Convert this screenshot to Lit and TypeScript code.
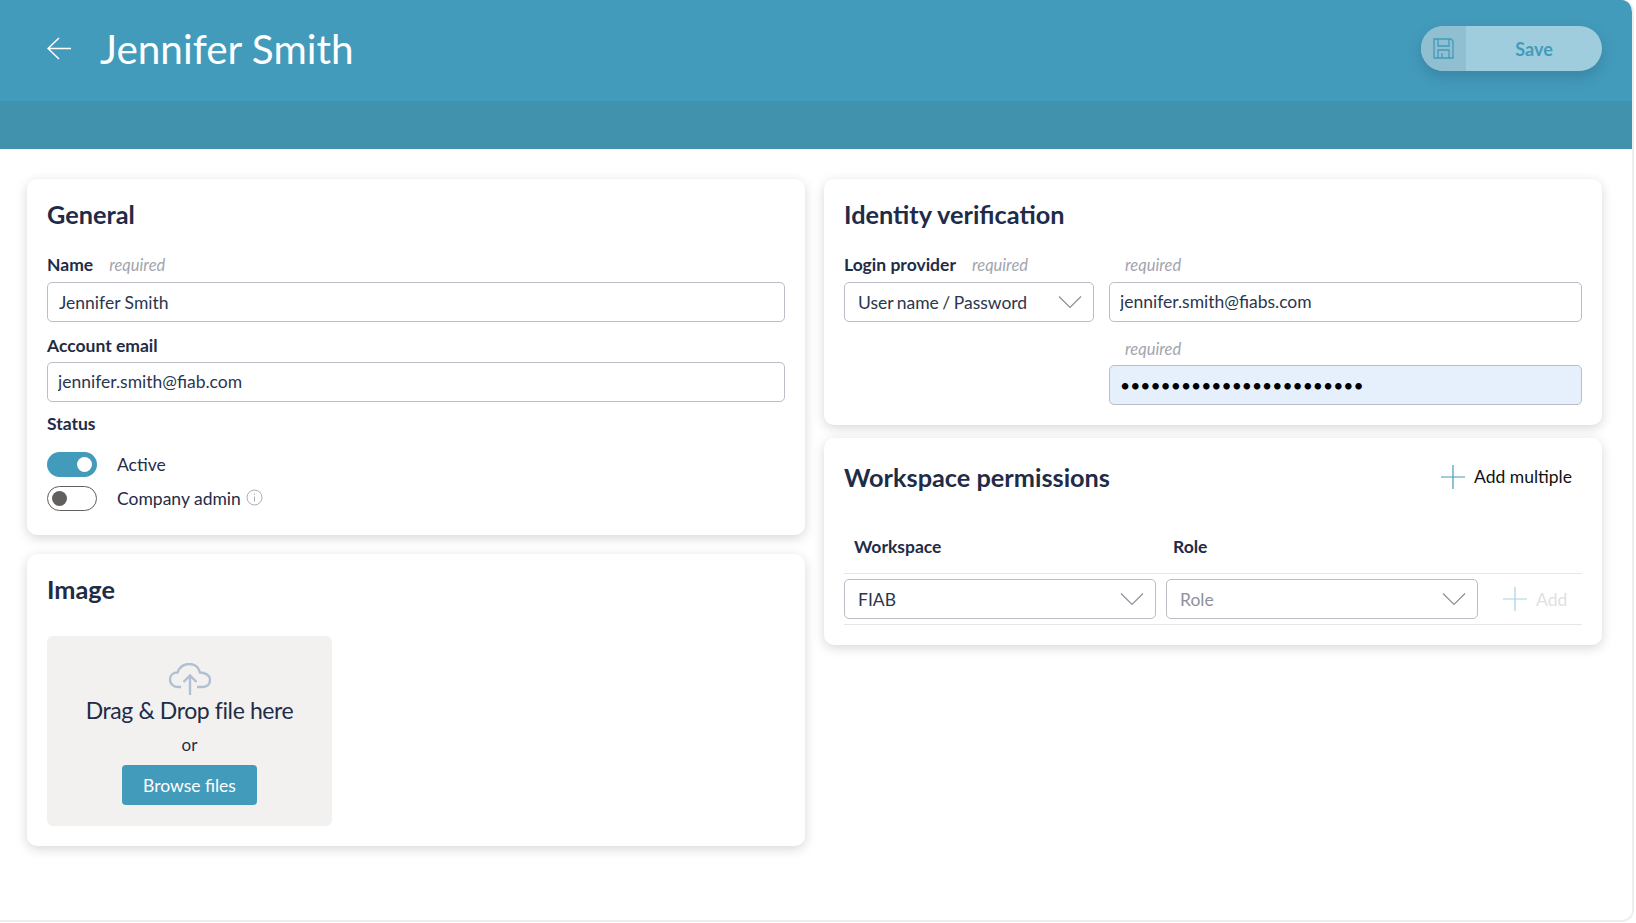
import { LitElement, html, css, svg } from "lit";
import { customElement } from "lit/decorators.js";

const chevron = html`<svg class="chev" width="24" height="14" viewBox="0 0 24 14" fill="none" stroke="#8b8f99" stroke-width="1.2"><path d="M1 1.5 12 12.5 23 1.5"/></svg>`;

const plus = () => html`<svg width="24" height="24" viewBox="0 0 24 24" fill="none" stroke="#439bbb" stroke-width="1.2"><path d="M0 12H24M12 0V24"/></svg>`;

const floppy = svg`<g fill="none" stroke="#439bbb" stroke-width="1.3"><path d="M1 1H18L20 3V20H1Z"/><path d="M5 1V8H16V1"/><path d="M5 20V12H16V20"/><path d="M9 15V20"/></g>`;

@customElement("app-root")
export class AppRoot extends LitElement {
  static styles = css`
    :host {
      display: block;
      font-family: "Lato", "Liberation Sans", sans-serif;
      color: #1f2c47;
      background: #fff;
    }
    * { box-sizing: border-box; }
    .frame {
      height: 922px;
      width: 1634px;
      border-right: 2px solid #eee;
      border-bottom: 2px solid #eee;
      border-radius: 0 12px 12px 0;
      overflow: hidden;
      background: #fff;
    }
    .head {
      height: 101px;
      background: #439bbb;
      display: flex;
      align-items: flex-start;
      padding: 26px 30px 0 47px;
    }
    .back { margin-top: 11px; }
    h1 {
      margin: -2px 0 0 29px;
      font-size: 40.5px;
      line-height: 49px;
      font-weight: 400;
      color: #fff;
    }
    .save {
      margin-left: auto;
      width: 181px;
      height: 45px;
      border-radius: 23px;
      overflow: hidden;
      display: flex;
      background: #a0cddd;
      box-shadow: 0 6px 14px rgba(30, 80, 110, 0.28);
    }
    .save .ico {
      width: 45px;
      background: #90bfd1;
      display: flex;
      align-items: center;
      justify-content: center;
    }
    .save .lbl {
      flex: 1;
      text-align: center;
      line-height: 46px;
      font-size: 18px;
      font-weight: 700;
      color: #439bbb;
    }
    .band { height: 48px; background: #4092ad; }
    .main {
      display: grid;
      grid-template-columns: 778px 778px;
      gap: 19px;
      padding: 30px 0 0 27px;
      align-items: start;
    }
    .col { display: flex; flex-direction: column; }
    .card {
      background: #fff;
      border-radius: 10px;
      box-shadow: 0 3px 12px rgba(0, 0, 0, 0.16);
      padding: 20px 20px 20px;
    }
    h2 {
      margin: 0;
      font-size: 25.3px;
      line-height: 30px;
      font-weight: 700;
      color: #1f2c47;
    }
    .general { height: 356px; }
    .image { height: 292px; margin-top: 19px; }
    .identity { height: 246px; }
    .perm { height: 207px; margin-top: 13px; padding-top: 24px; }
    .label {
      display: flex;
      align-items: baseline;
      gap: 16px;
      font-size: 17.5px;
      line-height: 22px;
      font-weight: 700;
    }
    .req {
      font-size: 16.5px;
      font-style: italic;
      font-weight: 400;
      color: #a2a5ae;
    }
    .field {
      display: block;
      width: 100%;
      height: 40px;
      border: 1px solid #bcbcc6;
      border-radius: 5px;
      background: #fff;
      font: 400 17.5px "Lato", sans-serif;
      color: #2a3650;
      padding: 0 11px;
      outline: none;
    }
    .field.tight { padding: 0 10px 2px; }
    .field.pw { padding: 0 10px; background: #e6f0fc; color: #000; }
    .select {
      height: 40px;
      border: 1px solid #bcbcc6;
      border-radius: 5px;
      display: flex;
      align-items: center;
      justify-content: space-between;
      padding: 0 11px 0 13px;
      font-size: 17.5px;
      word-spacing: -1px;
      color: #2a3650;
    }
    .select.ph { color: #8e919c; }
    .g-name { margin-top: 25px; }
    .g-name .field { margin-top: 6px; }
    .g-mail { margin-top: 13px; }
    .g-mail .field { margin-top: 5px; }
    .g-status { margin-top: 11px; }
    .toggles {
      margin-top: 17px;
      display: flex;
      flex-direction: column;
      gap: 9px;
    }
    .tg-row {
      display: flex;
      align-items: center;
      gap: 20px;
      font-size: 17.5px;
      line-height: 25px;
    }
    .tg {
      width: 50px;
      height: 25px;
      border-radius: 13px;
      display: flex;
      align-items: center;
      padding: 0 5px;
    }
    .tg.on { background: #439bbb; justify-content: flex-end; }
    .tg.off { border: 1px solid #62605e; padding: 0 4px; }
    .knob { width: 15px; height: 15px; border-radius: 50%; }
    .on .knob { background: #fff; }
    .off .knob { background: #62605e; }
    .info { margin-left: 5px; vertical-align: -1px; }
    .drop {
      margin-top: 32px;
      width: 285px;
      height: 190px;
      background: #f3f1f0;
      border-radius: 6px;
      display: flex;
      flex-direction: column;
      align-items: center;
      padding-top: 27px;
    }
    .drop .big {
      font-size: 23px;
      letter-spacing: -0.4px;
      line-height: 32px;
      margin-top: -1px;
    }
    .drop .or { font-size: 17px; line-height: 22px; margin-top: 8px; }
    .browse {
      margin-top: 9px;
      width: 135px;
      height: 40px;
      background: #439bbb;
      border-radius: 4px;
      color: #fff;
      font-size: 17.5px;
      line-height: 41px;
      text-align: center;
    }
    .id-grid {
      margin-top: 25px;
      display: grid;
      grid-template-columns: 250px 473px;
      column-gap: 15px;
    }
    .id-grid .label { height: 22px; margin-bottom: 6px; }
    .id-grid .right { padding-left: 16px; }
    .second { margin-top: 16px; grid-column: 2; }
    .id-grid .second .label { margin-bottom: 5px; }
    .p-head { display: flex; justify-content: space-between; align-items: center; }
    .add-m {
      display: flex;
      align-items: center;
      gap: 9px;
      font-size: 17.5px;
      color: #111;
      padding-right: 10px;
    }
    .add-m span { margin-top: -2px; }
    .t-head {
      margin-top: 44px;
      display: grid;
      grid-template-columns: 312px 312px;
      column-gap: 10px;
      height: 38px;
      border-bottom: 1px solid #e6e6ea;
      font-size: 17.5px;
      font-weight: 700;
      line-height: 22px;
    }
    .t-head div { padding-left: 10px; }
    .t-head div + div { padding-left: 7px; }
    .t-row {
      display: grid;
      grid-template-columns: 312px 312px 1fr;
      column-gap: 10px;
      height: 51px;
      align-items: center;
      border-bottom: 1px solid #e6e6ea;
    }
    .add-s {
      display: flex;
      align-items: center;
      gap: 9px;
      padding-left: 15px;
      font-size: 17.5px;
      color: #dfdfe2;
    }
    .add-s svg { opacity: 0.45; }
  `;

  render() {
    return html`
      <div class="frame">
        <div class="head">
          <svg class="back" width="24" height="23" viewBox="0 0 24 23" fill="none" stroke="#fff" stroke-width="1.5"><path d="M24 11.5H1M12 1 1 11.5 12 22"/></svg>
          <h1>Jennifer Smith</h1>
          <div class="save">
            <div class="ico"><svg width="21" height="21" viewBox="0 0 21 21">${floppy}</svg></div>
            <div class="lbl">Save</div>
          </div>
        </div>
        <div class="band"></div>
        <div class="main">
          <div class="col">
            <section class="card general">
              <h2>General</h2>
              <div class="g-name">
                <div class="label">Name <span class="req">required</span></div>
                <input class="field" value="Jennifer Smith" />
              </div>
              <div class="g-mail">
                <div class="label">Account email</div>
                <input class="field tight" value="jennifer.smith@fiab.com" />
              </div>
              <div class="g-status">
                <div class="label">Status</div>
                <div class="toggles">
                  <div class="tg-row"><div class="tg on"><div class="knob"></div></div>Active</div>
                  <div class="tg-row">
                    <div class="tg off"><div class="knob"></div></div>
                    <span>Company admin<svg class="info" width="17" height="17" viewBox="0 0 17 17" fill="none" stroke="#a9acb4"><circle cx="8.5" cy="8.5" r="7.5"/><path d="M8.5 7.5V12.5M8.5 4.500V5.800"/></svg></span>
                  </div>
                </div>
              </div>
            </section>
            <section class="card image">
              <h2>Image</h2>
              <div class="drop">
                <svg width="42" height="32" viewBox="0 0 42 32" fill="none" stroke="#b0bfd4" stroke-width="2.4"><path d="M12 24H9C4 24 1 20.500 1 16.500 1 12.500 4 9.500 8.500 9.500 10.500 4 15 1 20.500 1 26 1 30 4.500 31 9.500 36.500 9.500 41 12.500 41 17 41 21 38 24 33 24H28"/><path d="M21 32V13M14.500 19 21 12.500 27.500 19"/></svg>
                <div class="big">Drag &amp; Drop file here</div>
                <div class="or">or</div>
                <div class="browse">Browse files</div>
              </div>
            </section>
          </div>
          <div class="col">
            <section class="card identity">
              <h2>Identity verification</h2>
              <div class="id-grid">
                <div>
                  <div class="label">Login provider <span class="req">required</span></div>
                  <div class="select">User name / Password ${chevron}</div>
                </div>
                <div>
                  <div class="label right"><span class="req">required</span></div>
                  <input class="field tight" value="jennifer.smith@fiabs.com" />
                </div>
                <div class="second">
                  <div class="label right"><span class="req">required</span></div>
                  <input class="field pw" type="password" value="xxxxxxxxxxxxxxxxxxxxxxxx" />
                </div>
              </div>
            </section>
            <section class="card perm">
              <div class="p-head">
                <h2>Workspace permissions</h2>
                <div class="add-m">${plus()}<span>Add multiple</span></div>
              </div>
              <div class="t-head"><div>Workspace</div><div>Role</div></div>
              <div class="t-row">
                <div class="select">FIAB ${chevron}</div>
                <div class="select ph">Role ${chevron}</div>
                <div class="add-s">${plus()}Add</div>
              </div>
            </section>
          </div>
        </div>
      </div>
    `;
  }
}
